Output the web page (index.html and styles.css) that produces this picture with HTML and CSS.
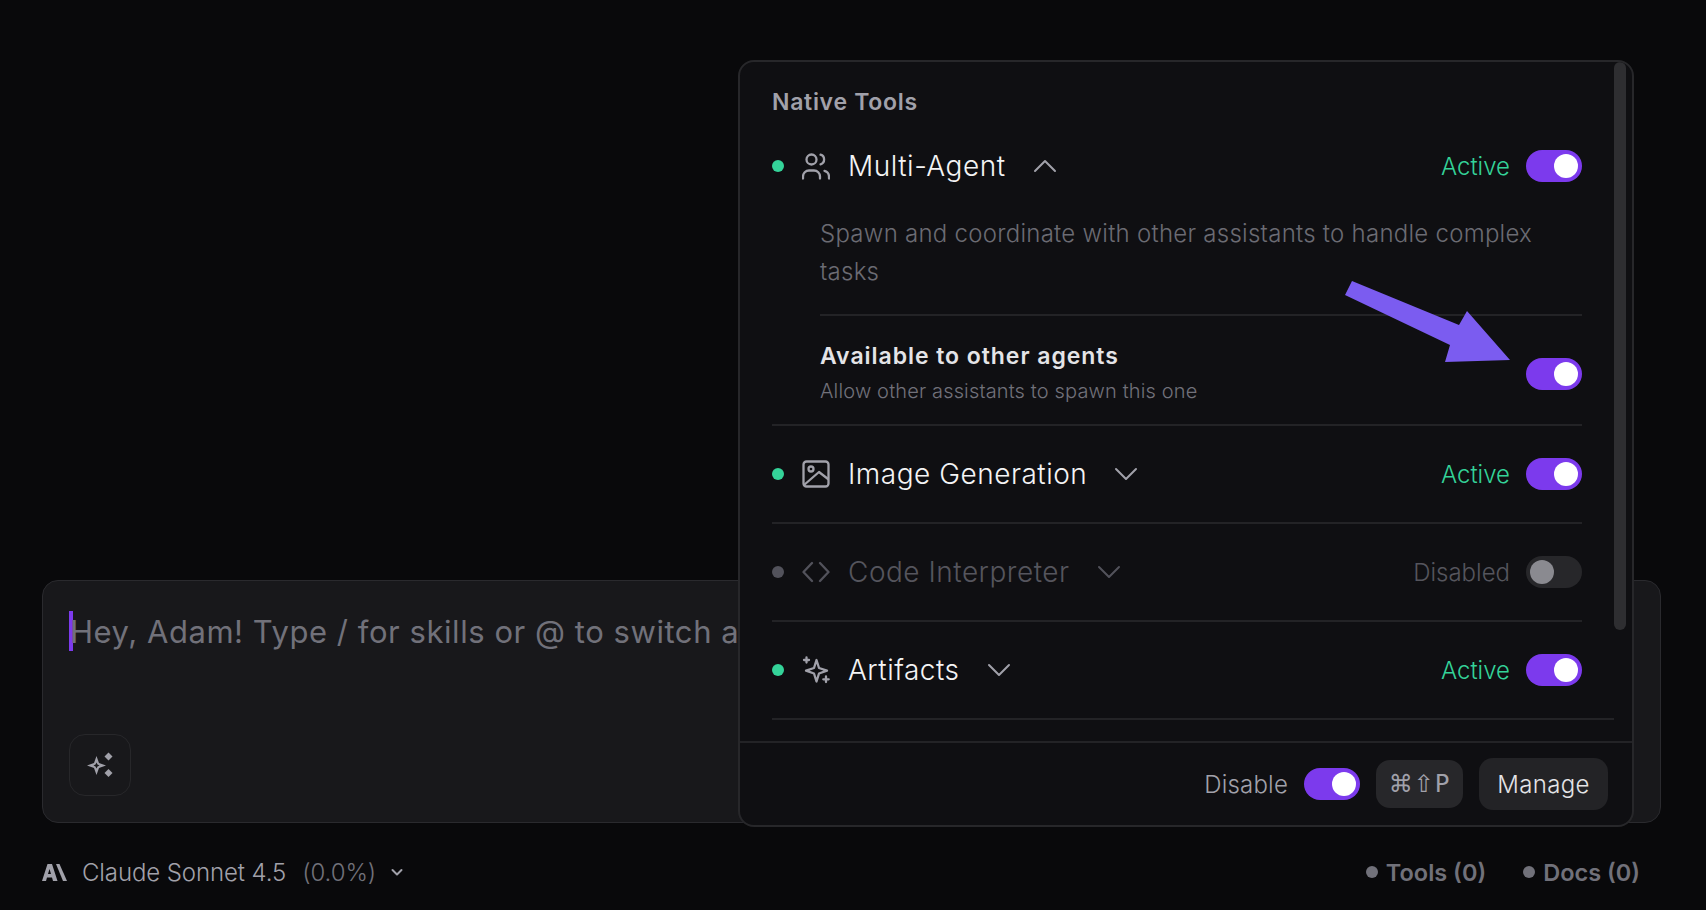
FILE: index.html
```html
<!DOCTYPE html>
<html lang="en">
<head>
  <meta charset="UTF-8" />
  <meta name="viewport" content="width=device-width, initial-scale=1.0" />
  <title>Chat</title>
  <link rel="stylesheet" href="styles.css">
</head>
<body>

<main class="page">
  <div class="composer">
    <div class="composer-input">
      <span class="caret"></span>
      <span class="placeholder">Hey, Adam! Type / for skills or @ to switch a</span>
    </div>
    <button class="spark-btn">
      <svg width="26" height="26" viewBox="0 0 26 26" fill="#a1a1aa"><path d="M9.500 4 L12 11 L19 13.500 L12 16 L9.500 23 L7 16 L0 13.500 L7 11 Z M9.500 10.500 L8.500 12.500 L6.500 13.500 L8.500 14.500 L9.500 16.500 L10.500 14.500 L12.500 13.500 L10.500 12.500 Z" fill-rule="evenodd"/><path d="M21.500 0.500 L25.500 4.500 L21.500 8.500 L17.500 4.500 Z"/><path d="M21.500 17 L25.500 21 L21.500 25 L17.500 21 Z"/></svg>
    </button>
  </div>

  <div class="status-bar">
    <div class="model">
      <svg class="model-logo" width="25" height="17" viewBox="0 0 25 17" fill="#a1a1aa"><path d="M5.500 0 H10 L15.500 17 H11 L10 13.500 H5 L4 17 H0 Z M7.500 5 L6 10 H9 Z" fill-rule="evenodd"/><path d="M14 0 H17.500 L25 17 H21 Z"/></svg>
      <span class="model-name">Claude Sonnet 4.5</span>
      <span class="model-pct">(0.0%)</span>
      <svg width="14" height="14" viewBox="0 0 14 14" fill="none" stroke="#a1a1aa" stroke-width="2" stroke-linecap="round" stroke-linejoin="round"><path d="M2.500 5 L7 9.500 L11.500 5"/></svg>
    </div>
    <div class="counts">
      <span class="count"><i class="count-dot"></i>Tools (0)</span>
      <span class="count"><i class="count-dot"></i>Docs (0)</span>
    </div>
  </div>
</main>

<!-- Tools popover -->
<section class="panel">
  <div class="panel-scroll">
    <h2 class="panel-title">Native Tools</h2>

    <div class="tool tool-open">
      <div class="tool-head">
        <i class="dot"></i>
        <svg class="tool-icon" width="28" height="28" viewBox="0 0 28 28" fill="none" stroke="#a1a1aa" stroke-linecap="round" stroke-linejoin="round"><circle cx="9.500" cy="7.500" r="5"/><path d="M18.500 2.700a5 5 0 0 1 0 9.600"/><path d="M1 26.500v-2a6 6 0 0 1 6-6h5a6 6 0 0 1 6 6v2"/><path d="M22.500 18.800a6 6 0 0 1 4.500 5.700v2"/></svg>
        <span class="tool-name">Multi-Agent</span>
        <svg class="chev" width="24" height="24" viewBox="0 0 24 24" fill="none" stroke="#a1a1aa" stroke-width="2" stroke-linecap="round" stroke-linejoin="round"><path d="M2 17 L12 7 L22 17"/></svg>
        <span class="state">Active</span>
        <span class="toggle on"></span>
      </div>
      <p class="tool-desc">Spawn and coordinate with other assistants to handle complex tasks</p>
      <div class="sub-option">
        <div class="sub-copy">
          <div class="sub-title">Available to other agents</div>
          <div class="sub-text">Allow other assistants to spawn this one</div>
        </div>
        <span class="toggle on"></span>
      </div>
    </div>

    <div class="tool">
      <div class="tool-head">
        <i class="dot"></i>
        <svg class="tool-icon" width="28" height="28" viewBox="0 0 28 28" fill="none" stroke="#a1a1aa" stroke-linecap="round" stroke-linejoin="round"><rect x="1.500" y="1.500" width="25" height="25" rx="3"/><circle cx="9" cy="9" r="2.500"/><path d="M2 25 L17 12 L26 19"/></svg>
        <span class="tool-name">Image Generation</span>
        <svg class="chev" width="24" height="24" viewBox="0 0 24 24" fill="none" stroke="#a1a1aa" stroke-width="2" stroke-linecap="round" stroke-linejoin="round"><path d="M2 7 L12 17 L22 7"/></svg>
        <span class="state">Active</span>
        <span class="toggle on"></span>
      </div>
    </div>

    <div class="tool tool-off">
      <div class="tool-head">
        <i class="dot"></i>
        <svg class="tool-icon" width="28" height="28" viewBox="0 0 28 28" fill="none" stroke="#52525b" stroke-linecap="round" stroke-linejoin="round"><path d="M10 5 L1.500 14 L10 23"/><path d="M18 5 L26.500 14 L18 23"/></svg>
        <span class="tool-name">Code Interpreter</span>
        <svg class="chev" width="24" height="24" viewBox="0 0 24 24" fill="none" stroke="#52525b" stroke-width="2" stroke-linecap="round" stroke-linejoin="round"><path d="M2 7 L12 17 L22 7"/></svg>
        <span class="state">Disabled</span>
        <span class="toggle"></span>
      </div>
    </div>

    <div class="tool tool-last">
      <div class="tool-head">
        <i class="dot"></i>
        <svg class="tool-icon" width="28" height="28" viewBox="0 0 28 28" fill="none" stroke="#a1a1aa" stroke-linecap="round" stroke-linejoin="round"><path d="M14.500 4 L17 12 L25 14.700 L17 17.500 L14.500 25.500 L12 17.500 L4 14.700 L12 12 Z"/><path d="M4.500 1.500v5M2 4h5"/><path d="M24 20.500v5.500M21.300 23.300h5.400"/></svg>
        <span class="tool-name">Artifacts</span>
        <svg class="chev" width="24" height="24" viewBox="0 0 24 24" fill="none" stroke="#a1a1aa" stroke-width="2" stroke-linecap="round" stroke-linejoin="round"><path d="M2 7 L12 17 L22 7"/></svg>
        <span class="state">Active</span>
        <span class="toggle on"></span>
      </div>
    </div>
  </div>

  <div class="scroll-thumb"></div>

  <div class="panel-foot">
    <span class="foot-label">Disable</span>
    <span class="toggle on"></span>
    <span class="kbd">⌘⇧P</span>
    <button class="manage">Manage</button>
  </div>
</section>

<!-- Annotation arrow -->
<svg class="arrow" width="170" height="85" viewBox="1345 280 170 85"><polygon fill="#7b5cf0" points="1352,281 1345,295 1450,345 1445,362 1510,360 1467,311 1459,325"/></svg>

</body>
</html>
```

FILE: styles.css
```css
* {
  margin: 0;
  padding: 0;
  box-sizing: border-box;
}

html, body {
  height: 100%;
  overflow: hidden;
  background: #09090b;
  color: #f4f4f5;
  font-family: Inter, 'Noto Sans', sans-serif;
}

.page {
  height: 100%;
  display: flex;
  flex-direction: column;
  justify-content: flex-end;
  padding: 0 45px 0 42px;
}

/* Composer */
.composer {
  height: 243px;
  background: #18181b;
  border: 1px solid #2a2a2e;
  border-radius: 16px;
  padding: 30px 26px 26px;
  display: flex;
  flex-direction: column;
  justify-content: space-between;
  align-items: flex-start;
}

.composer-input {
  display: flex;
  align-items: center;
  height: 40px;
}

.caret {
  width: 4px;
  height: 40px;
  background: #7c3aed;
  margin-right: -3px;
}

.placeholder {
  font-size: 31px;
  letter-spacing: 0.55px;
  color: #71717a;
  white-space: nowrap;
}

.spark-btn {
  width: 62px;
  height: 62px;
  border-radius: 16px;
  border: 1px solid #27272a;
  background: #18181b;
  display: flex;
  align-items: center;
  justify-content: center;
}

/* Status bar */
.status-bar {
  height: 87px;
  display: flex;
  justify-content: space-between;
  align-items: center;
  padding-top: 11px;
}

.model {
  display: flex;
  align-items: center;
  font-size: 24px;
  letter-spacing: -0.1px;
  font-weight: 300;
  color: #a1a1aa;
}

.model-logo {
  margin-right: 15px;
}

.model-pct {
  color: #71717a;
  margin: 0 14px 0 16px;
}

.counts {
  display: flex;
  gap: 37px;
  padding-right: 21px;
}

.count {
  display: flex;
  align-items: center;
  gap: 8px;
  font-size: 23.500px;
  font-weight: 600;
  color: #71717a;
}

.count-dot {
  width: 12px;
  height: 12px;
  border-radius: 50%;
  background: #71717a;
}

/* Tools popover */
.panel {
  position: absolute;
  top: 60px;
  left: 738px;
  width: 896px;
  height: 767px;
  display: flex;
  flex-direction: column;
  background: #0f0f12;
  border: 2px solid #27272a;
  border-radius: 16px;
  overflow: hidden;
}

.panel-scroll {
  height: 679px;
  padding: 0 18px 0 32px;
  overflow: hidden;
}

.panel-title {
  font-size: 23px;
  letter-spacing: 0.7px;
  font-weight: 600;
  color: #a1a1aa;
  height: 55px;
  padding-top: 26px;
  line-height: 28px;
}

.tool {
  border-bottom: 2px solid #232326;
  margin-right: 32px;
}

.tool-last {
  margin-right: 0;
}

.tool-head {
  display: flex;
  align-items: center;
  height: 96px;
}

.tool-open .tool-head {
  height: 98px;
}

.tool-last .tool-head {
  padding-right: 32px;
}

.dot {
  width: 12px;
  height: 12px;
  border-radius: 50%;
  background: #34d399;
  margin-right: 18px;
}

.tool-icon {
  margin-right: 18px;
  stroke-width: 2.300;
}

.tool-name {
  font-size: 28px;
  letter-spacing: 0.5px;
  font-weight: 300;
  color: #f4f4f5;
}

.chev {
  margin-left: 27px;
}

.state {
  margin-left: auto;
  font-size: 24px;
  font-weight: 300;
  color: #34d399;
  margin-right: 16px;
}

.toggle {
  position: relative;
  width: 56px;
  height: 32px;
  border-radius: 16px;
  background: #27272a;
  flex-shrink: 0;
}

.toggle::after {
  content: "";
  position: absolute;
  top: 4px;
  left: 4px;
  width: 24px;
  height: 24px;
  border-radius: 50%;
  background: #8a8a90;
}

.toggle.on {
  background: #7c3aed;
}

.toggle.on::after {
  left: 28px;
  background: #fff;
}

.tool-off .dot {
  background: #52525b;
}

.tool-off .tool-name,
.tool-off .state {
  color: #55555d;
}

.tool-desc {
  margin-left: 48px;
  font-size: 24px;
  letter-spacing: 0.26px;
  font-weight: 300;
  line-height: 38px;
  color: #6b6b73;
  padding-bottom: 23px;
  border-bottom: 2px solid #232326;
  max-width: 762px;
}

.sub-option {
  margin-left: 48px;
  height: 108px;
  display: flex;
  align-items: center;
  justify-content: space-between;
}

.sub-copy {
  padding-top: 4px;
}

.sub-option .toggle {
  margin-top: 7px;
}

.sub-title {
  font-size: 23px;
  letter-spacing: 0.95px;
  font-weight: 600;
  color: #e4e4e7;
  line-height: 30px;
  margin-bottom: 7px;
}

.sub-text {
  font-size: 20px;
  letter-spacing: 0.15px;
  font-weight: 300;
  color: #71717a;
  line-height: 26px;
}

.scroll-thumb {
  position: absolute;
  top: 0;
  right: 6px;
  width: 12px;
  height: 568px;
  border-radius: 6px;
  background: #2e2e31;
}

.panel-foot {
  flex: 1;
  display: flex;
  align-items: center;
  justify-content: flex-end;
  gap: 16px;
  padding-right: 24px;
  border-top: 2px solid #232326;
}

.foot-label {
  font-size: 24px;
  letter-spacing: 0.2px;
  font-weight: 300;
  color: #a1a1aa;
}

.kbd {
  width: 87px;
  height: 48px;
  display: flex;
  align-items: center;
  justify-content: center;
  border-radius: 14px;
  background: #27272a;
  color: #a1a1aa;
  font-family: 'DejaVu Sans', sans-serif;
  font-size: 24px;
  letter-spacing: 1px;
}

.manage {
  width: 129px;
  height: 52px;
  border: none;
  border-radius: 14px;
  background: #232326;
  color: #e4e4e7;
  font-family: inherit;
  font-size: 24px;
  letter-spacing: 0.3px;
  font-weight: 300;
}

.arrow {
  position: absolute;
  top: 280px;
  left: 1345px;
}
```
